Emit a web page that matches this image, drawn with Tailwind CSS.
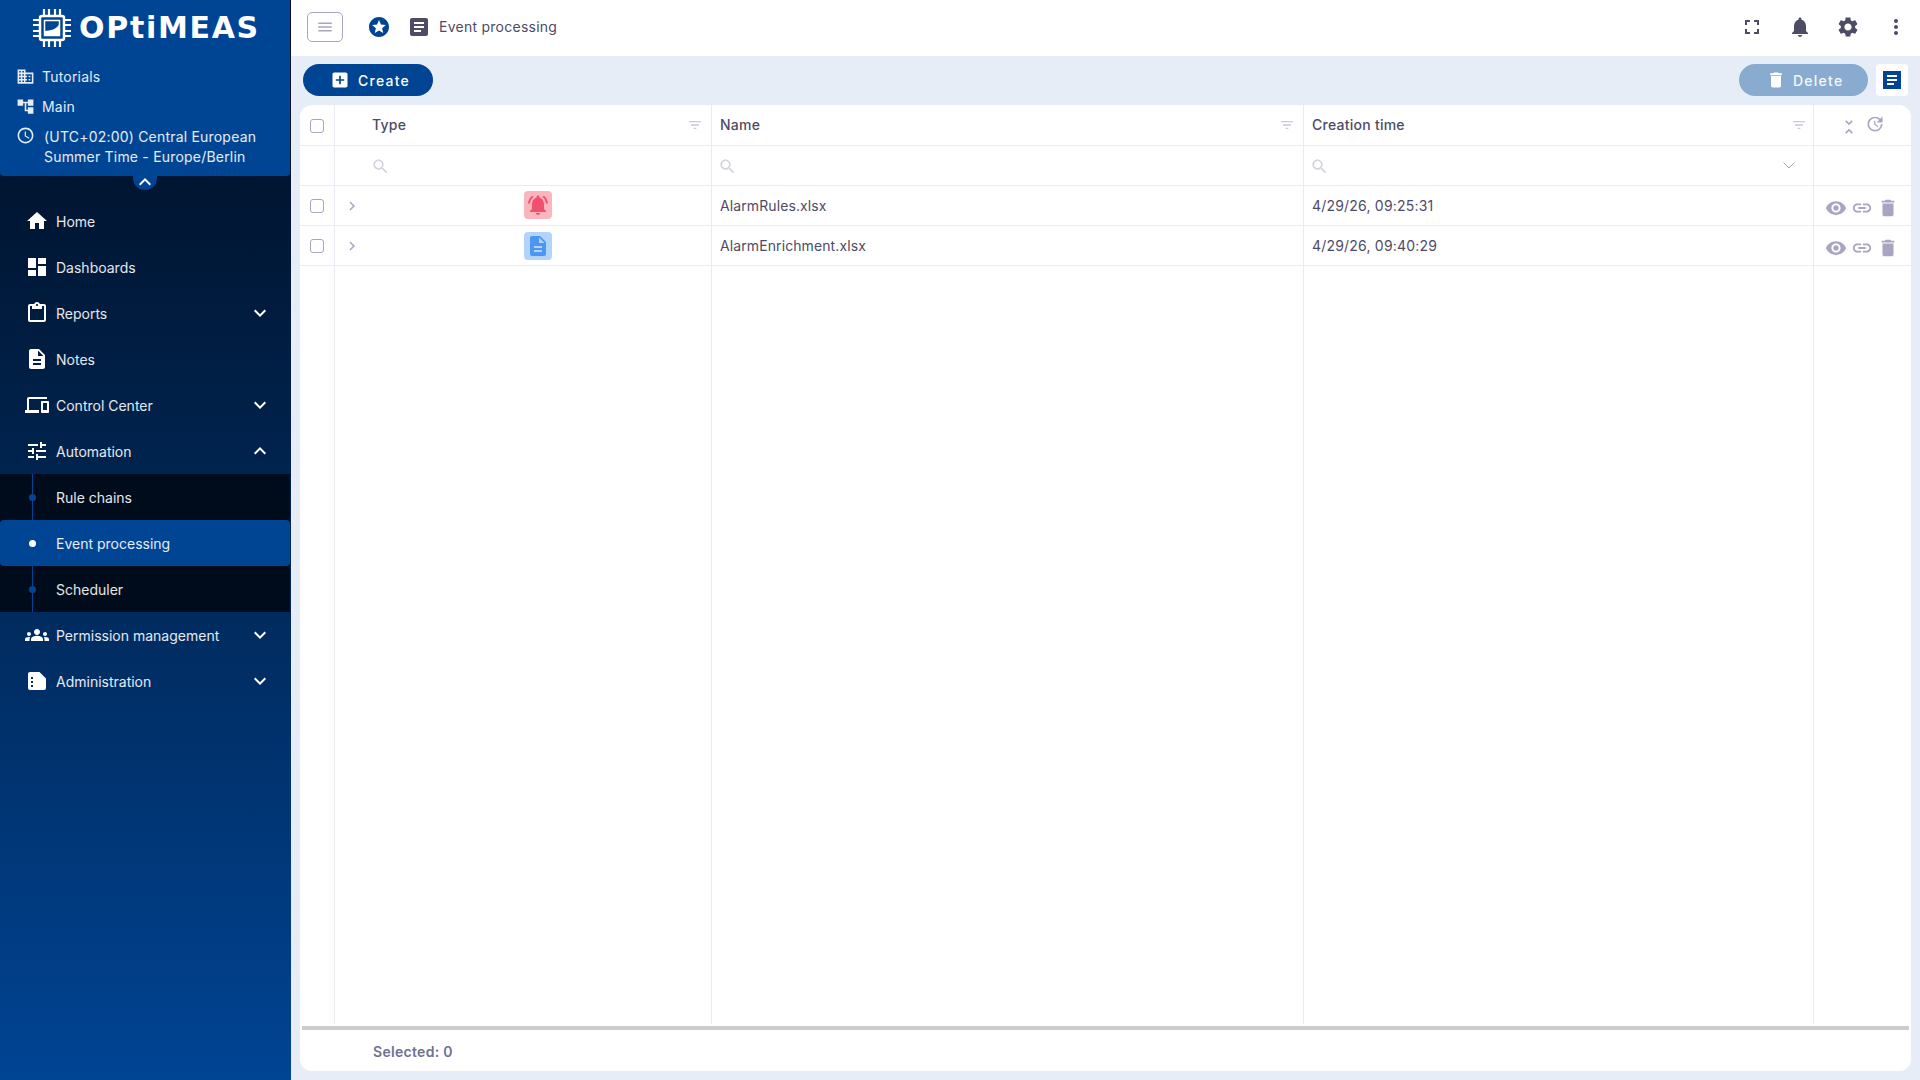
<!DOCTYPE html>
<html lang="en">
<head>
  <meta charset="UTF-8" />
  <title>Event processing</title>
  <script src="https://cdn.jsdelivr.net/npm/@tailwindcss/browser@4"></script>
</head>
<body class="w-[1920px] h-[1080px] overflow-hidden flex bg-[#e6edf7] font-[Inter,sans-serif] text-[14px] text-[#4e4b66]">

  <!-- sidebar -->
  <aside class="relative w-[291px] h-full shrink-0 flex flex-col bg-gradient-to-b from-[#000d20] to-[#004494] text-white/90">
    <div class="relative h-[176px] shrink-0 bg-[#004494] rounded-b-[4px] mr-[1px]">
      <div class="h-[61px] flex items-start pl-[32px] pt-[8px] gap-[7px]">
        <svg class="w-[40px] h-[40px]" viewBox="0 0 40 40" fill="none" stroke="#fff">
          <path d="M12 8V1M17 8V1M23 8V1M28 8V1M12 39v-7M17 39v-7M23 39v-7M28 39v-7M1 12h7M1 17h7M1 23h7M1 28h7M39 12h-7M39 17h-7M39 23h-7M39 28h-7" stroke-width="2.200"/>
          <rect x="8" y="8" width="24" height="24" rx="2" stroke-width="2.500" fill="#004494"/>
          <rect x="12.500" y="12.500" width="15" height="15" stroke-width="1.500"/>
          <path d="M12.500 27.500V23c6-.5 12-1.500 15-7v11.500z" fill="#fff" stroke="none"/>
        </svg>
        <span class="font-['DejaVu_Sans',sans-serif] font-bold text-[30px] leading-[40px] tracking-[1.7px] text-white">OPtiMEAS</span>
      </div>
      <div class="h-[30px] flex items-center pl-[16px] gap-[7px] tracking-[0.2px]">
        <svg class="w-[19px] h-[19px]" viewBox="0 0 24 24" fill="currentColor"><path d="M12 7V3H2v18h20V7H12zM6 19H4v-2h2v2zm0-4H4v-2h2v2zm0-4H4V9h2v2zm0-4H4V5h2v2zm4 12H8v-2h2v2zm0-4H8v-2h2v2zm0-4H8V9h2v2zm0-4H8V5h2v2zm10 12h-8v-2h2v-2h-2v-2h2v-2h-2V9h8v10zm-2-8h-2v2h2v-2zm0 4h-2v2h2v-2z"/></svg>
        <span>Tutorials</span>
      </div>
      <div class="h-[30px] flex items-center pl-[16px] gap-[7px] tracking-[0.2px]">
        <svg class="w-[19px] h-[19px]" viewBox="0 0 24 24" fill="currentColor"><path d="M22 11V3h-7v3H9V3H2v8h7V8h2v10h4v3h7v-8h-7v3h-2V8h2v3z"/></svg>
        <span>Main</span>
      </div>
      <div class="mt-[6px] flex items-start pl-[16px] gap-[9px] leading-[20px] tracking-[0.2px]">
        <svg class="w-[19px] h-[19px] mt-[-1px] shrink-0" viewBox="0 0 24 24" fill="currentColor"><path d="M11.990 2C6.470 2 2 6.480 2 12s4.470 10 9.990 10C17.520 22 22 17.520 22 12S17.520 2 11.990 2zM12 20c-4.420 0-8-3.580-8-8s3.580-8 8-8 8 3.580 8 8-3.580 8-8 8zm.5-13H11v6l5.250 3.150.75-1.230-4.500-2.670z"/></svg>
        <span>(UTC+02:00) Central European<br>Summer Time - Europe/Berlin</span>
      </div>
      <div class="absolute left-[133px] top-[176px] w-[24px] h-[14px] bg-[#004494] rounded-b-[12px] flex justify-center items-start">
        <svg class="w-[24px] h-[24px] mt-[-6px]" viewBox="0 0 24 24" fill="#fff"><path d="M12 8l-6 6 1.410 1.410L12 10.830l4.590 4.580L18 14z"/></svg>
      </div>
    </div>

    <nav class="mt-[22px] flex flex-col">
      <a class="h-[46px] flex items-center pl-[25px] pr-[19px]">
        <svg class="w-[24px] h-[24px] mr-[7px]" viewBox="0 0 24 24" fill="#fff"><path d="M10 20v-6h4v6h5v-8h3L12 3 2 12h3v8z"/></svg>
        <span class="flex-1">Home</span>
      </a>
      <a class="h-[46px] flex items-center pl-[25px] pr-[19px]">
        <svg class="w-[24px] h-[24px] mr-[7px]" viewBox="0 0 24 24" fill="#fff"><path d="M3 13h8V3H3v10zm0 8h8v-6H3v6zm10 0h8V11h-8v10zm0-18v6h8V3h-8z"/></svg>
        <span class="flex-1">Dashboards</span>
      </a>
      <a class="h-[46px] flex items-center pl-[25px] pr-[19px]">
        <svg class="w-[24px] h-[24px] mr-[7px]" viewBox="0 0 24 24" fill="#fff"><path d="M19 3h-4.180C14.400 1.840 13.300 1 12 1s-2.400.84-2.820 2H5c-1.100 0-2 .9-2 2v14c0 1.100.9 2 2 2h14c1.100 0 2-.9 2-2V5c0-1.100-.9-2-2-2zm-7 0c.55 0 1 .45 1 1s-.45 1-1 1-1-.45-1-1 .45-1 1-1zm7 16H5V5h2v3h10V5h2v14z"/></svg>
        <span class="flex-1">Reports</span>
        <svg class="w-[24px] h-[24px]" viewBox="0 0 24 24" fill="#fff"><path d="M16.590 8.590L12 13.170 7.410 8.590 6 10l6 6 6-6z"/></svg>
      </a>
      <a class="h-[46px] flex items-center pl-[25px] pr-[19px]">
        <svg class="w-[24px] h-[24px] mr-[7px]" viewBox="0 0 24 24" fill="#fff"><path d="M14 2H6c-1.100 0-1.990.9-1.990 2L4 20c0 1.100.89 2 1.990 2H18c1.100 0 2-.9 2-2V8l-6-6zm2 16H8v-2h8v2zm0-4H8v-2h8v2zm-3-5V3.500L18.500 9H13z"/></svg>
        <span class="flex-1">Notes</span>
      </a>
      <a class="h-[46px] flex items-center pl-[25px] pr-[19px]">
        <svg class="w-[24px] h-[24px] mr-[7px]" viewBox="0 0 24 24" fill="#fff"><path d="M4 6h18V4H4c-1.100 0-2 .9-2 2v11H0v3h14v-3H4V6zm19 2h-6c-.55 0-1 .45-1 1v10c0 .55.45 1 1 1h6c.55 0 1-.45 1-1V9c0-.55-.45-1-1-1zm-1 9h-4v-7h4v7z"/></svg>
        <span class="flex-1">Control Center</span>
        <svg class="w-[24px] h-[24px]" viewBox="0 0 24 24" fill="#fff"><path d="M16.590 8.590L12 13.170 7.410 8.590 6 10l6 6 6-6z"/></svg>
      </a>
      <a class="h-[46px] flex items-center pl-[25px] pr-[19px]">
        <svg class="w-[24px] h-[24px] mr-[7px]" viewBox="0 0 24 24" fill="#fff"><path d="M3 17v2h6v-2H3zM3 5v2h10V5H3zm10 16v-2h8v-2h-8v-2h-2v6h2zM7 9v2H3v2h4v2h2V9H7zm14 4v-2H11v2h10zm-6-4h2V7h4V5h-4V3h-2v6z"/></svg>
        <span class="flex-1">Automation</span>
        <svg class="w-[24px] h-[24px]" viewBox="0 0 24 24" fill="#fff"><path d="M12 8l-6 6 1.410 1.410L12 10.830l4.590 4.580L18 14z"/></svg>
      </a>

      <div class="relative bg-[#000c1b] mr-[1px]">
        <div class="absolute left-[32px] top-0 bottom-0 w-[1px] bg-[#004494]"></div>
        <a class="relative h-[46px] flex items-center pl-[56px]">
          <span class="absolute left-[29px] top-[20px] w-[7px] h-[7px] rounded-full bg-[#004494]"></span>
          <span>Rule chains</span>
        </a>
        <a class="relative h-[46px] flex items-center pl-[56px] bg-[#004494] rounded-[4px]">
          <span class="absolute left-[29px] top-[20px] w-[7px] h-[7px] rounded-full bg-white"></span>
          <span>Event processing</span>
        </a>
        <a class="relative h-[46px] flex items-center pl-[56px]">
          <span class="absolute left-[29px] top-[20px] w-[7px] h-[7px] rounded-full bg-[#004494]"></span>
          <span>Scheduler</span>
        </a>
      </div>

      <a class="h-[46px] flex items-center pl-[25px] pr-[19px]">
        <svg class="w-[24px] h-[24px] mr-[7px]" viewBox="0 0 24 24" fill="#fff"><path d="M12 12.750c1.630 0 3.070.39 4.240.9 1.080.48 1.760 1.560 1.760 2.730V18H6v-1.610c0-1.180.68-2.260 1.760-2.730 1.170-.52 2.610-.91 4.240-.91zM4 13c1.100 0 2-.9 2-2s-.9-2-2-2-2 .9-2 2 .9 2 2 2zm1.130 1.100c-.37-.06-.74-.1-1.130-.1-.99 0-1.930.21-2.780.58C.48 14.900 0 15.620 0 16.430V18h4.500v-1.610c0-.83.23-1.610.63-2.290zM20 13c1.100 0 2-.9 2-2s-.9-2-2-2-2 .9-2 2 .9 2 2 2zm4 3.430c0-.81-.48-1.530-1.220-1.850-.85-.37-1.790-.58-2.780-.58-.39 0-.76.04-1.130.1.4.68.63 1.460.63 2.290V18H24v-1.570zM12 6c1.660 0 3 1.340 3 3s-1.340 3-3 3-3-1.340-3-3 1.340-3 3-3z"/></svg>
        <span class="flex-1">Permission management</span>
        <svg class="w-[24px] h-[24px]" viewBox="0 0 24 24" fill="#fff"><path d="M16.590 8.590L12 13.170 7.410 8.590 6 10l6 6 6-6z"/></svg>
      </a>
      <a class="h-[46px] flex items-center pl-[25px] pr-[19px]">
        <svg class="w-[24px] h-[24px] mr-[7px]" viewBox="0 0 24 24" fill="#fff" fill-rule="evenodd"><path d="M5 3h9.500L21 9.500V19a2 2 0 0 1-2 2H5a2 2 0 0 1-2-2V5a2 2 0 0 1 2-2zM6 8v2h2V8zm0 4v2h2v-2zm0 4v2h2v-2z"/></svg>
        <span class="flex-1">Administration</span>
        <svg class="w-[24px] h-[24px]" viewBox="0 0 24 24" fill="#fff"><path d="M16.590 8.590L12 13.170 7.410 8.590 6 10l6 6 6-6z"/></svg>
      </a>
    </nav>
  </aside>

  <!-- main -->
  <div class="flex-1 min-w-0 flex flex-col">
    <header class="h-[56px] shrink-0 bg-white flex items-center pl-[16px] pr-[12px] pb-[3px]">
      <button class="w-[36px] h-[30px] border border-[#a7a5c0] rounded-[5px] flex items-center justify-center">
        <svg class="w-[18px] h-[18px]" viewBox="0 0 24 24" fill="#a7a5c0"><path d="M3 18h18v-2H3v2zm0-5h18v-2H3v2zm0-7v2h18V6H3z"/></svg>
      </button>
      <svg class="w-[24px] h-[24px] ml-[24px]" viewBox="0 0 24 24" fill="#004494"><path d="M11.990 2C6.470 2 2 6.480 2 12s4.470 10 9.990 10C17.520 22 22 17.520 22 12S17.520 2 11.990 2zm4.240 16L12 15.450 7.770 18l1.120-4.810-3.730-3.230 4.920-.42L12 5l1.920 4.530 4.920.42-3.730 3.230L16.230 18z"/></svg>
      <svg class="w-[24px] h-[24px] ml-[16px]" viewBox="0 0 24 24" fill="#4e4b66"><path d="M19 3H5c-1.100 0-2 .9-2 2v14c0 1.100.9 2 2 2h14c1.100 0 2-.9 2-2V5c0-1.100-.9-2-2-2zm-5 14H7v-2h7v2zm3-4H7v-2h10v2zm0-4H7V7h10v2z"/></svg>
      <span class="ml-[8px] tracking-[0.25px]">Event processing</span>
      <div class="ml-auto flex items-center gap-[24px]">
        <svg class="w-[24px] h-[24px]" viewBox="0 0 24 24" fill="#4e4b66"><path d="M7 14H5v5h5v-2H7v-3zm-2-4h2V7h3V5H5v5zm12 7h-3v2h5v-5h-2v3zM14 5v2h3v3h2V5h-5z"/></svg>
        <svg class="w-[24px] h-[24px]" viewBox="0 0 24 24" fill="#4e4b66"><path d="M12 22c1.100 0 2-.9 2-2h-4c0 1.100.89 2 2 2zm6-6v-5c0-3.070-1.640-5.640-4.500-6.320V4c0-.83-.67-1.500-1.500-1.500s-1.500.67-1.500 1.500v.68C7.630 5.360 6 7.920 6 11v5l-2 2v1h16v-1l-2-2z"/></svg>
        <svg class="w-[24px] h-[24px]" viewBox="0 0 24 24" fill="#4e4b66"><path d="M19.140 12.940c.04-.3.06-.61.06-.94 0-.32-.02-.64-.07-.94l2.030-1.580c.18-.14.23-.41.12-.61l-1.920-3.320c-.12-.22-.37-.29-.59-.22l-2.390.96c-.5-.38-1.030-.7-1.620-.94l-.36-2.540c-.04-.24-.24-.41-.48-.41h-3.840c-.24 0-.43.17-.47.41l-.36 2.540c-.59.24-1.130.57-1.620.94l-2.390-.96c-.22-.08-.47 0-.59.22L2.740 8.870c-.12.21-.08.47.12.61l2.030 1.580c-.05.3-.09.63-.09.94s.02.64.07.94l-2.030 1.580c-.18.14-.23.41-.12.61l1.920 3.320c.12.22.37.29.59.22l2.390-.96c.5.38 1.030.7 1.620.94l.36 2.540c.05.24.24.41.48.41h3.840c.24 0 .44-.17.47-.41l.36-2.540c.59-.24 1.130-.56 1.620-.94l2.390.96c.22.08.47 0 .59-.22l1.920-3.320c.12-.22.07-.47-.12-.61l-2.010-1.580zM12 15.600c-1.980 0-3.600-1.620-3.600-3.600s1.620-3.600 3.600-3.600 3.600 1.620 3.600 3.600-1.620 3.600-3.600 3.600z"/></svg>
        <svg class="w-[24px] h-[24px]" viewBox="0 0 24 24" fill="#4e4b66"><path d="M12 8c1.100 0 2-.9 2-2s-.9-2-2-2-2 .9-2 2 .9 2 2 2zm0 2c-1.100 0-2 .9-2 2s.9 2 2 2 2-.9 2-2-.9-2-2-2zm0 6c-1.100 0-2 .9-2 2s.9 2 2 2 2-.9 2-2-.9-2-2-2z"/></svg>
      </div>
    </header>

    <!-- toolbar -->
    <div class="h-[49px] shrink-0 pt-[8px] pl-[12px] pr-[12px] flex items-start">
      <button class="w-[130px] h-[32px] rounded-full bg-[#004494] text-white font-medium tracking-[1.25px] flex items-center pl-[28px] gap-[8px]">
        <svg class="w-[20px] h-[20px] ml-[-1px]" viewBox="0 0 24 24" fill="#fff"><path d="M19 3H5c-1.110 0-2 .9-2 2v14c0 1.100.89 2 2 2h14c1.100 0 2-.9 2-2V5c0-1.100-.9-2-2-2zm-2 10h-4v4h-2v-4H7v-2h4V7h2v4h4v2z"/></svg>
        <span>Create</span>
      </button>
      <button class="ml-auto w-[129px] h-[32px] rounded-full bg-[#8aabd0] text-white/90 font-medium tracking-[1.25px] flex items-center pl-[27px] gap-[7px]">
        <svg class="w-[20px] h-[20px]" viewBox="0 0 24 24" fill="#fff"><path d="M6 19c0 1.100.9 2 2 2h8c1.100 0 2-.9 2-2V7H6v12zM19 4h-3.500l-1-1h-5l-1 1H5v2h14V4z"/></svg>
        <span>Delete</span>
      </button>
      <button class="ml-[8px] w-[32px] h-[32px] rounded-[4px] bg-white flex items-center justify-center">
        <svg class="w-[24px] h-[24px]" viewBox="0 0 24 24" fill="#004494"><path d="M3 3h18v18H3zm4 14h7v-2H7zm0-4h10v-2H7zm0-4h10V7H7z" fill-rule="evenodd"/></svg>
      </button>
    </div>

    <!-- table card -->
    <section class="ml-[9px] mr-[9px] h-[966px] bg-white rounded-[12px] flex flex-col overflow-hidden">
      <div class="h-[41px] shrink-0 grid grid-cols-[35px_377px_592px_510px_1fr] border-b border-[#e9ecf3] font-medium tracking-[0.25px]">
        <div class="border-r border-[#e9ecf3] flex items-center justify-center pt-[1px]">
          <span class="w-[14px] h-[14px] border-[1.5px] border-[#a7a5c0] rounded-[3px]"></span>
        </div>
        <div class="border-r border-[#e9ecf3] flex items-center justify-between pl-[37px] pr-[8px] pb-[1px]">
          <span>Type</span>
          <svg class="w-[16px] h-[16px]" viewBox="0 0 24 24" fill="#c9c8d8"><path d="M10 18h4v-2h-4v2zM3 6v2h18V6H3zm3 7h12v-2H6v2z"/></svg>
        </div>
        <div class="border-r border-[#e9ecf3] flex items-center justify-between pl-[8px] pr-[8px] pb-[1px]">
          <span>Name</span>
          <svg class="w-[16px] h-[16px]" viewBox="0 0 24 24" fill="#c9c8d8"><path d="M10 18h4v-2h-4v2zM3 6v2h18V6H3zm3 7h12v-2H6v2z"/></svg>
        </div>
        <div class="border-r border-[#e9ecf3] flex items-center justify-between pl-[8px] pr-[6px] pb-[1px]">
          <span>Creation time</span>
          <svg class="w-[16px] h-[16px]" viewBox="0 0 24 24" fill="#c9c8d8"><path d="M10 18h4v-2h-4v2zM3 6v2h18V6H3zm3 7h12v-2H6v2z"/></svg>
        </div>
        <div class="flex items-center pl-[25px] gap-[6px]">
          <svg class="w-[20px] h-[20px] mt-[3px]" viewBox="0 0 24 24" fill="#a7a5c0"><path d="M7.410 18.590L8.830 20 12 16.830 15.170 20l1.410-1.410L12 14l-4.590 4.590zm9.180-13.180L15.170 4 12 7.170 8.830 4 7.410 5.410 12 10l4.590-4.590z"/></svg>
          <svg class="w-[20px] h-[20px] mt-[-3px]" viewBox="0 0 24 24" fill="#a7a5c0"><path d="M21 10.120h-6.780l2.740-2.820c-2.730-2.700-7.150-2.800-9.880-.1-2.730 2.710-2.730 7.080 0 9.790s7.150 2.710 9.880 0C18.320 15.650 19 14.080 19 12.100h2c0 1.980-.88 4.550-2.640 6.290-3.510 3.480-9.210 3.480-12.720 0-3.500-3.470-3.530-9.110-.02-12.580s9.140-3.470 12.650 0L21 3v7.120zM12.500 8v4.250l3.500 2.080-.72 1.210L11 13V8h1.500z"/></svg>
        </div>
      </div>

      <div class="h-[40px] shrink-0 grid grid-cols-[35px_377px_592px_510px_1fr] border-b border-[#e9ecf3]">
        <div class="border-r border-[#e9ecf3]"></div>
        <div class="border-r border-[#e9ecf3] flex items-center pl-[36px] pt-[2px]">
          <svg class="w-[19px] h-[19px]" viewBox="0 0 24 24" fill="#d3d2e0"><path d="M15.500 14h-.79l-.28-.27C15.410 12.590 16 11.110 16 9.500 16 5.910 13.090 3 9.500 3S3 5.910 3 9.500 5.910 16 9.500 16c1.610 0 3.090-.59 4.230-1.570l.27.28v.79l5 4.990L20.490 19l-4.990-5zm-6 0C7.010 14 5 11.990 5 9.500S7.010 5 9.500 5 14 7.010 14 9.500 11.990 14 9.500 14z"/></svg>
        </div>
        <div class="border-r border-[#e9ecf3] flex items-center pl-[6px] pt-[2px]">
          <svg class="w-[19px] h-[19px]" viewBox="0 0 24 24" fill="#d3d2e0"><path d="M15.500 14h-.79l-.28-.27C15.410 12.590 16 11.110 16 9.500 16 5.910 13.090 3 9.500 3S3 5.910 3 9.500 5.910 16 9.500 16c1.610 0 3.090-.59 4.230-1.570l.27.28v.79l5 4.990L20.490 19l-4.990-5zm-6 0C7.010 14 5 11.990 5 9.500S7.010 5 9.500 5 14 7.010 14 9.500 11.990 14 9.500 14z"/></svg>
        </div>
        <div class="border-r border-[#e9ecf3] flex items-center justify-between pl-[6px] pr-[17px] pt-[2px]">
          <svg class="w-[19px] h-[19px]" viewBox="0 0 24 24" fill="#d3d2e0"><path d="M15.500 14h-.79l-.28-.27C15.410 12.590 16 11.110 16 9.500 16 5.910 13.090 3 9.500 3S3 5.910 3 9.500 5.910 16 9.500 16c1.610 0 3.090-.59 4.230-1.570l.27.28v.79l5 4.990L20.490 19l-4.990-5zm-6 0C7.010 14 5 11.990 5 9.500S7.010 5 9.500 5 14 7.010 14 9.500 11.990 14 9.500 14z"/></svg>
          <svg class="w-[14px] h-[14px] mt-[-3px]" viewBox="0 0 14 14" fill="none" stroke="#a7a5c0"><path d="M1.500 4.500 7 10l5.500-5.500"/></svg>
        </div>
        <div></div>
      </div>

      <div class="h-[40px] shrink-0 grid grid-cols-[35px_377px_592px_510px_1fr] border-b border-[#e9ecf3] tracking-[0.1px]">
        <div class="border-r border-[#e9ecf3] flex items-center justify-center">
          <span class="w-[14px] h-[14px] border-[1.5px] border-[#a7a5c0] rounded-[3px]"></span>
        </div>
        <div class="relative border-r border-[#e9ecf3] flex items-center pl-[8px]">
          <svg class="w-[18px] h-[18px]" viewBox="0 0 24 24" fill="#a7a5c0"><path d="M10 6L8.590 7.410 13.170 12l-4.580 4.590L10 18l6-6z"/></svg>
          <span class="absolute left-[189px] top-[5px] w-[28px] h-[28px] rounded-[4px] bg-[#fbb5bf] flex items-center justify-center">
            <svg class="w-[24px] h-[24px]" viewBox="0 0 24 24" fill="#f0506e"><path d="M7.580 4.080L6.150 2.650C3.750 4.480 2.170 7.300 2.030 10.500h2c.15-2.650 1.510-4.970 3.550-6.420zm12.390 6.420h2c-.15-3.200-1.730-6.020-4.120-7.850l-1.420 1.430c2.020 1.450 3.390 3.770 3.540 6.420zM18 11c0-3.070-1.640-5.640-4.500-6.320V4c0-.83-.67-1.500-1.500-1.500s-1.500.67-1.500 1.500v.68C7.630 5.360 6 7.920 6 11v5l-2 2v1h16v-1l-2-2v-5zm-6 11c.14 0 .27-.01.4-.04.65-.14 1.180-.58 1.440-1.180.1-.24.15-.5.15-.78h-4c.01 1.100.9 2 2.010 2z"/></svg>
          </span>
        </div>
        <div class="border-r border-[#e9ecf3] flex items-center pl-[8px]">AlarmRules.xlsx</div>
        <div class="border-r border-[#e9ecf3] flex items-center pl-[8px] tracking-[0.2px]">4/29/26, 09:25:31</div>
        <div class="flex items-center pl-[11px] gap-[4px] pt-[5px]">
          <svg class="w-[22px] h-[22px]" viewBox="0 0 24 24" fill="#a7a5c0"><path d="M12 4.500C7 4.500 2.730 7.610 1 12c1.730 4.390 6 7.500 11 7.500s9.270-3.110 11-7.500c-1.730-4.390-6-7.500-11-7.500zM12 17c-2.760 0-5-2.240-5-5s2.240-5 5-5 5 2.240 5 5-2.240 5-5 5zm0-8c-1.660 0-3 1.340-3 3s1.340 3 3 3 3-1.340 3-3-1.340-3-3-3z"/></svg>
          <svg class="w-[22px] h-[22px]" viewBox="0 0 24 24" fill="#a7a5c0"><path d="M3.900 12c0-1.710 1.390-3.100 3.100-3.100h4V7H7c-2.760 0-5 2.240-5 5s2.240 5 5 5h4v-1.900H7c-1.710 0-3.100-1.390-3.100-3.100zM8 13h8v-2H8v2zm9-6h-4v1.900h4c1.710 0 3.100 1.390 3.100 3.100s-1.390 3.100-3.100 3.100h-4V17h4c2.760 0 5-2.240 5-5s-2.240-5-5-5z"/></svg>
          <svg class="w-[22px] h-[22px]" viewBox="0 0 24 24" fill="#a7a5c0"><path d="M6 19c0 1.100.9 2 2 2h8c1.100 0 2-.9 2-2V7H6v12zM19 4h-3.500l-1-1h-5l-1 1H5v2h14V4z"/></svg>
        </div>
      </div>

      <div class="h-[40px] shrink-0 grid grid-cols-[35px_377px_592px_510px_1fr] border-b border-[#e9ecf3] tracking-[0.1px]">
        <div class="border-r border-[#e9ecf3] flex items-center justify-center">
          <span class="w-[14px] h-[14px] border-[1.5px] border-[#a7a5c0] rounded-[3px]"></span>
        </div>
        <div class="relative border-r border-[#e9ecf3] flex items-center pl-[8px]">
          <svg class="w-[18px] h-[18px]" viewBox="0 0 24 24" fill="#a7a5c0"><path d="M10 6L8.590 7.410 13.170 12l-4.580 4.590L10 18l6-6z"/></svg>
          <span class="absolute left-[189px] top-[6px] w-[28px] h-[28px] rounded-[4px] bg-[#b2d4fb] flex items-center justify-center">
            <svg class="w-[24px] h-[24px]" viewBox="0 0 24 24" fill="#4b96f0"><path d="M14 2H6c-1.100 0-1.990.9-1.990 2L4 20c0 1.100.89 2 1.990 2H18c1.100 0 2-.9 2-2V8l-6-6zm2 16H8v-2h8v2zm0-4H8v-2h8v2zm-3-5V3.500L18.500 9H13z"/></svg>
          </span>
        </div>
        <div class="border-r border-[#e9ecf3] flex items-center pl-[8px]">AlarmEnrichment.xlsx</div>
        <div class="border-r border-[#e9ecf3] flex items-center pl-[8px] tracking-[0.2px]">4/29/26, 09:40:29</div>
        <div class="flex items-center pl-[11px] gap-[4px] pt-[5px]">
          <svg class="w-[22px] h-[22px]" viewBox="0 0 24 24" fill="#a7a5c0"><path d="M12 4.500C7 4.500 2.730 7.610 1 12c1.730 4.390 6 7.500 11 7.500s9.270-3.110 11-7.500c-1.730-4.390-6-7.500-11-7.500zM12 17c-2.760 0-5-2.240-5-5s2.240-5 5-5 5 2.240 5 5-2.240 5-5 5zm0-8c-1.660 0-3 1.340-3 3s1.340 3 3 3 3-1.340 3-3-1.340-3-3-3z"/></svg>
          <svg class="w-[22px] h-[22px]" viewBox="0 0 24 24" fill="#a7a5c0"><path d="M3.900 12c0-1.710 1.390-3.100 3.100-3.100h4V7H7c-2.760 0-5 2.240-5 5s2.240 5 5 5h4v-1.900H7c-1.710 0-3.100-1.390-3.100-3.100zM8 13h8v-2H8v2zm9-6h-4v1.900h4c1.710 0 3.100 1.390 3.100 3.100s-1.390 3.100-3.100 3.100h-4V17h4c2.760 0 5-2.240 5-5s-2.240-5-5-5z"/></svg>
          <svg class="w-[22px] h-[22px]" viewBox="0 0 24 24" fill="#a7a5c0"><path d="M6 19c0 1.100.9 2 2 2h8c1.100 0 2-.9 2-2V7H6v12zM19 4h-3.500l-1-1h-5l-1 1H5v2h14V4z"/></svg>
        </div>
      </div>

      <!-- empty rest of the table, keeps the column lines going -->
      <div class="flex-1 grid grid-cols-[35px_377px_592px_510px_1fr]">
        <div class="border-r border-[#e9ecf3]"></div>
        <div class="border-r border-[#e9ecf3]"></div>
        <div class="border-r border-[#e9ecf3]"></div>
        <div class="border-r border-[#e9ecf3]"></div>
        <div></div>
      </div>
      <div class="h-[4px] shrink-0 mx-[2px] mt-[2px] bg-[#cccccc]"></div>
      <div class="h-[41px] shrink-0 flex items-center pl-[73px] pt-[2px] font-semibold tracking-[0.3px] text-[#6e7191]">Selected: 0</div>
    </section>
  </div>
</body>
</html>
